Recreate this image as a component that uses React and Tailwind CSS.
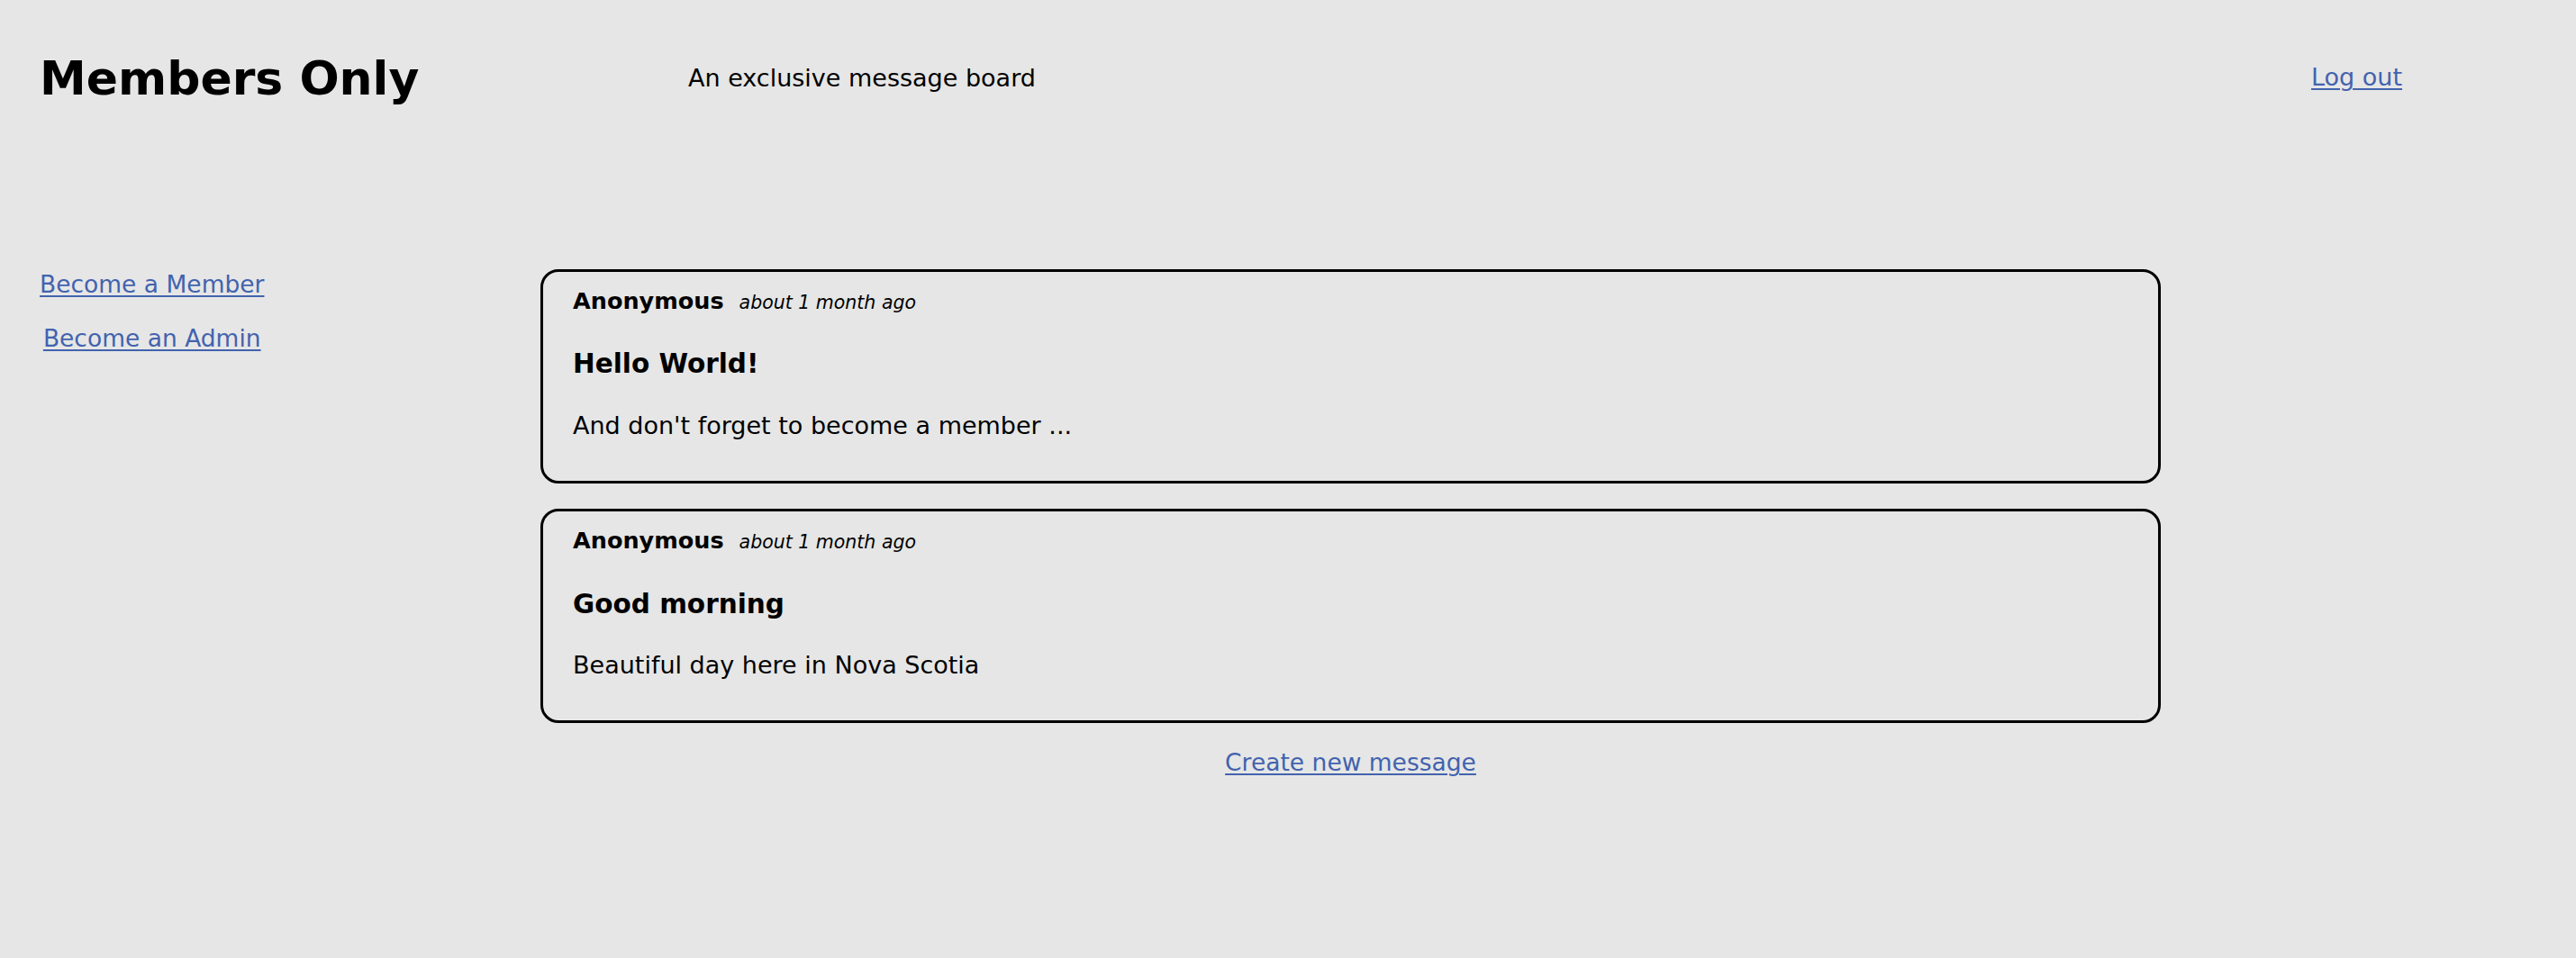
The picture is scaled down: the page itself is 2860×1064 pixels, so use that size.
import React from "react";

// Members Only – message board home

const messages = [
  {
    id: 1,
    author: "Anonymous",
    when: "about 1 month ago",
    title: "Hello World!",
    body: "And don't forget to become a member ...",
  },
  {
    id: 2,
    author: "Anonymous",
    when: "about 1 month ago",
    title: "Good morning",
    body: "Beautiful day here in Nova Scotia",
  },
];

const linkCls = "text-[#4263ae] underline underline-offset-[3px] decoration-[2px]";

function MessageCard({ msg }) {
  return (
    <article className="rounded-[20px] border-[3px] border-black px-[33px] pt-[18px] pb-[46px]">
      <div className="flex items-baseline">
        <span className="text-[25.5px] font-bold">{msg.author}</span>
        <span className="ml-[17px] text-[20.5px] italic">{msg.when}</span>
      </div>
      <h2 className="mt-[38px] text-[29.5px] font-bold">{msg.title}</h2>
      <p className="mt-[35px] text-[27px]">{msg.body}</p>
    </article>
  );
}

export default function App() {
  return (
    <div
      className="min-h-screen bg-[#e6e6e6] text-black leading-[1.164]"
      style={{ fontFamily: '"DejaVu Sans", "Noto Sans", sans-serif' }}
    >
      {/* Header */}
      <header className="flex items-start pt-[57px]">
        <h1 className="ml-[44px] w-[720px] text-[52px] font-bold">Members Only</h1>
        <p className="mt-[14px] text-[27px]">An exclusive message board</p>
        <a href="#" className={`ml-auto mr-[193px] mt-[13px] text-[27px] ${linkCls}`}>
          Log out
        </a>
      </header>

      {/* Body */}
      <div className="mt-[181px] flex">
        <nav className="ml-[44px] w-[556px]">
          <div className="inline-flex flex-col items-center gap-[30px] pt-[2px] text-[26.5px]">
            <a href="#" className={linkCls}>Become a Member</a>
            <a href="#" className={linkCls}>Become an Admin</a>
          </div>
        </nav>

        <main className="w-[1799px]">
          <div className="flex flex-col gap-[28px]">
            {messages.map((m) => (
              <MessageCard key={m.id} msg={m} />
            ))}
          </div>
          <div className="mt-[29px] text-center">
            <a href="#" className={`text-[26.5px] ${linkCls}`}>Create new message</a>
          </div>
        </main>
      </div>
    </div>
  );
}
